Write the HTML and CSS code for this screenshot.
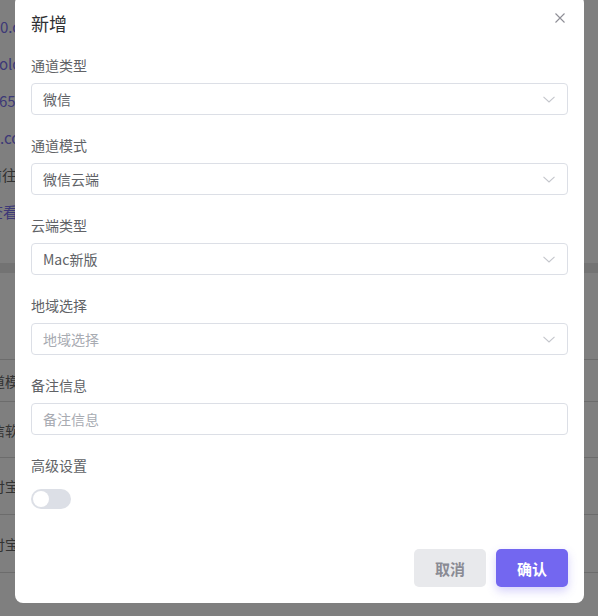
FILE: index.html
```html
<!DOCTYPE html>
<html lang="zh">
<head>
<meta charset="utf-8">
<title>新增</title>
<link rel="stylesheet" href="styles.css">
</head>
<body>
<div class="page">
  <div class="info">
    <div class="info-row link">0.com</div>
    <div class="info-row link shift1">olo.com</div>
    <div class="info-row link shift2">658</div>
    <div class="info-row link">.com</div>
    <div class="info-row plain shift3">前往</div>
    <div class="info-row link shift4">查看</div>
  </div>
  <div class="band"></div>
  <div class="table">
    <div class="table-head"></div>
    <div class="trow r1"><span class="cell">道模式</span></div>
    <div class="trow r2"><span class="cell">信软件</span></div>
    <div class="trow r3"><span class="cell">付宝</span></div>
    <div class="trow r4"><span class="cell">付宝</span></div>
    <div class="trow r5"></div>
  </div>
</div>
<div class="overlay"></div>
<div class="modal">
  <div class="modal-header">
    <span class="modal-title">新增</span>
    <button class="close" aria-label="关闭">
      <svg width="10" height="10" viewBox="0 0 10 10"><path d="M0.5 0.5 L9.5 9.5 M9.5 0.5 L0.5 9.5" stroke="#8e8e96" stroke-width="1.1" fill="none"/></svg>
    </button>
  </div>
  <div class="form">
    <div class="item">
      <div class="label">通道类型</div>
      <div class="select"><span class="value">微信</span><svg class="chev" width="12" height="7" viewBox="0 0 12 7"><path d="M0.5 0.8 L6 6 L11.5 0.8" stroke="#c4c6cc" stroke-width="1.1" fill="none"/></svg></div>
    </div>
    <div class="item">
      <div class="label">通道模式</div>
      <div class="select"><span class="value">微信云端</span><svg class="chev" width="12" height="7" viewBox="0 0 12 7"><path d="M0.5 0.8 L6 6 L11.5 0.8" stroke="#c4c6cc" stroke-width="1.1" fill="none"/></svg></div>
    </div>
    <div class="item">
      <div class="label">云端类型</div>
      <div class="select"><span class="value">Mac新版</span><svg class="chev" width="12" height="7" viewBox="0 0 12 7"><path d="M0.5 0.8 L6 6 L11.5 0.8" stroke="#c4c6cc" stroke-width="1.1" fill="none"/></svg></div>
    </div>
    <div class="item">
      <div class="label">地域选择</div>
      <div class="select"><span class="placeholder">地域选择</span><svg class="chev" width="12" height="7" viewBox="0 0 12 7"><path d="M0.5 0.8 L6 6 L11.5 0.8" stroke="#c4c6cc" stroke-width="1.1" fill="none"/></svg></div>
    </div>
    <div class="item">
      <div class="label">备注信息</div>
      <div class="select"><span class="placeholder">备注信息</span></div>
    </div>
    <div class="item">
      <div class="label">高级设置</div>
      <div class="switch-box"><span class="switch"><span class="knob"></span></span></div>
    </div>
  </div>
  <div class="footer">
    <button class="btn cancel">取消</button>
    <button class="btn confirm">确认</button>
  </div>
</div>
</body>
</html>
```

FILE: styles.css
```css
* { box-sizing: border-box; }
html, body {
  margin: 0;
  padding: 0;
}
body {
  width: 598px;
  height: 616px;
  overflow: hidden;
  background: #ffffff;
  font-family: "Noto Sans CJK SC", "Noto Sans", sans-serif;
  position: relative;
}
.page {
  width: 598px;
}
.info {
  padding-top: 8px;
  height: 263px;
}
.info-row {
  height: 37px;
  line-height: 37px;
  font-size: 15px;
  white-space: nowrap;
}
.link { color: #7b72ee; }
.plain { color: #666666; }
.shift1 { margin-left: -1px; }
.shift2 { margin-left: -1px; }
.shift3 { margin-left: -13px; }
.shift4 { margin-left: -12px; }
.band {
  height: 10px;
  background: #e6e6e6;
}
.table-head {
  height: 86px;
}
.trow {
  border-top: 1px solid #d8d8d8;
  display: flex;
  align-items: center;
  font-size: 14px;
  color: #666666;
  white-space: nowrap;
}
.r1 { height: 42px; }
.r2 { height: 56px; }
.r3 { height: 57px; }
.r4 { height: 58px; }
.r5 { height: 44px; }
.cell { margin-left: -9px; }

.overlay {
  position: absolute;
  inset: 0;
  background: rgba(0, 0, 0, 0.5);
}
.modal {
  position: absolute;
  left: 15px;
  top: -5px;
  width: 569px;
  height: 608px;
  background: #ffffff;
  border-radius: 8px;
  padding: 16px 16px 16px;
  display: flex;
  flex-direction: column;
}
.modal-header {
  height: 24px;
  display: flex;
  align-items: center;
}
.modal-title {
  font-size: 18px;
  line-height: 24px;
  color: #303133;
}
.close {
  position: absolute;
  top: 18px;
  right: 19px;
  width: 10px;
  height: 10px;
  padding: 0;
  border: 0;
  background: none;
  display: block;
}
.close svg { display: block; }
.form {
  margin-top: 20px;
  display: flex;
  flex-direction: column;
  gap: 20px;
}
.label {
  font-size: 14px;
  line-height: 20px;
  color: #606266;
  margin-bottom: 8px;
}
.select {
  height: 32px;
  border: 1px solid #dcdfe6;
  border-radius: 4px;
  padding: 0 12px 0 11px;
  display: flex;
  align-items: center;
  justify-content: space-between;
  font-size: 14px;
}
.value { color: #606266; }
.placeholder { color: #a8abb2; }
.chev { display: block; margin-top: 1px; }
.switch-box {
  height: 32px;
  display: flex;
  align-items: center;
}
.switch {
  width: 40px;
  height: 20px;
  border-radius: 10px;
  background: #dcdfe6;
  position: relative;
  display: block;
}
.knob {
  position: absolute;
  left: 2px;
  top: 2px;
  width: 16px;
  height: 16px;
  border-radius: 50%;
  background: #ffffff;
}
.footer {
  margin-top: auto;
  display: flex;
  justify-content: flex-end;
  gap: 10px;
}
.btn {
  width: 72px;
  height: 38px;
  border: 0;
  border-radius: 5px;
  font-family: "Noto Sans CJK SC", "Noto Sans", sans-serif;
  font-size: 15px;
  font-weight: 700;
  padding: 0;
}
.cancel {
  background: #e8e9ec;
  color: #8a8b94;
}
.confirm {
  background: #7367f0;
  color: #ffffff;
  box-shadow: 0 4px 10px rgba(115, 103, 240, 0.3);
}
```
